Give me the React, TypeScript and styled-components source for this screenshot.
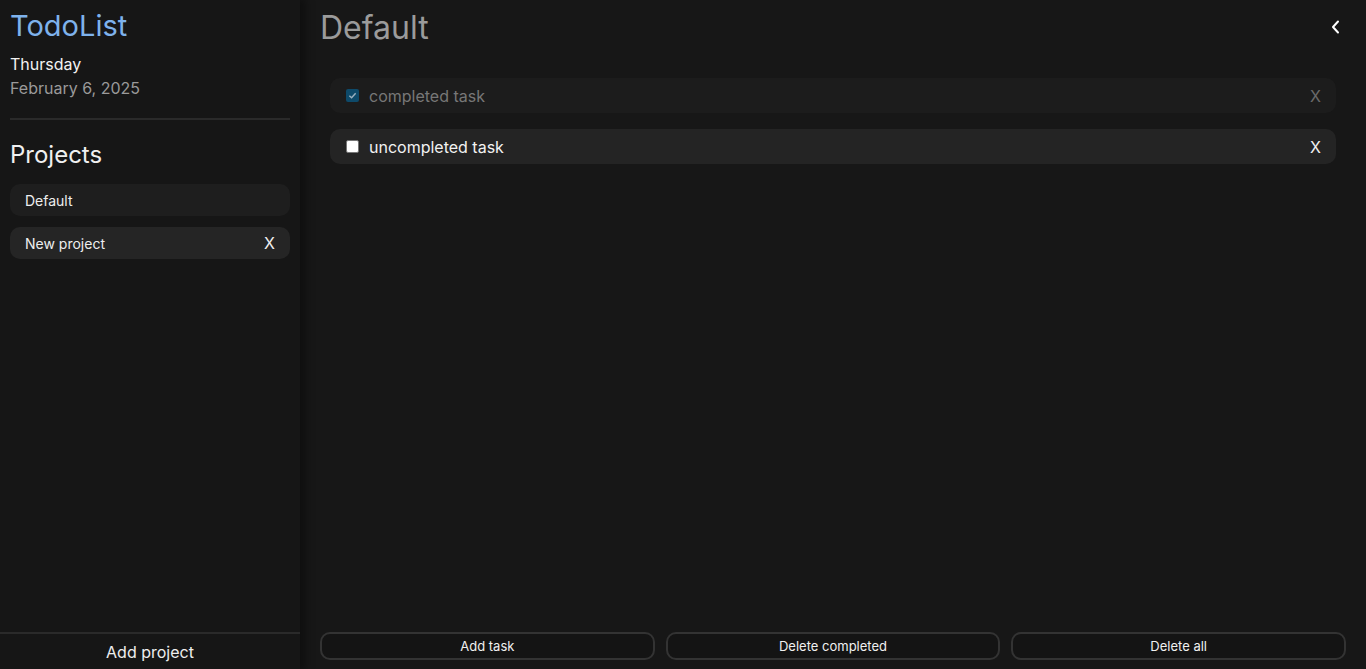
import styled, { createGlobalStyle } from 'styled-components';

const Global = createGlobalStyle`
  html, body {
    margin: 0;
    padding: 0;
    background: #171717;
    font-family: 'Inter', 'Noto Sans', sans-serif;
    color: #eeeeee;
  }
  * { box-sizing: border-box; }
`;

const Layout = styled.div`
  display: flex;
  height: 669px;
  width: 1366px;
  overflow: hidden;
  background: #171717;
`;

const Sidebar = styled.aside`
  width: 300px;
  flex-shrink: 0;
  display: flex;
  flex-direction: column;
  background: #161616;
  box-shadow: 4px 0px 8px 2px rgba(0, 0, 0, 0.35);
  position: relative;
  z-index: 1;
`;

const SideTop = styled.div`
  flex: 1;
  padding: 7px 10px 0 10px;
  display: flex;
  flex-direction: column;
`;

const Logo = styled.h1`
  margin: 0;
  font-size: 29px;
  font-weight: 400;
  line-height: 38px;
  color: #7eb2ec;
`;

const Weekday = styled.div`
  margin-top: 7px;
  font-size: 16px;
  line-height: 24px;
  color: #f2f2f2;
`;

const DateText = styled.div`
  font-size: 16px;
  line-height: 24px;
  color: #9a9a9a;
`;

const Divider = styled.hr`
  margin: 18px 0 0 0;
  border: none;
  height: 2px;
  background: #2a2a2a;
`;

const SectionTitle = styled.h2`
  margin: 20px 0 0 0;
  font-size: 24px;
  font-weight: 400;
  line-height: 30px;
  color: #f0f0f0;
`;

const ProjectList = styled.div`
  margin-top: 14px;
  display: flex;
  flex-direction: column;
  gap: 11px;
`;

const ProjectItem = styled.div<{ active?: boolean }>`
  height: 32px;
  border-radius: 10px;
  background: ${p => (p.active ? '#252525' : '#1e1e1e')};
  display: flex;
  align-items: center;
  justify-content: space-between;
  padding: 0 15px;
  font-size: 14px;
  color: #eeeeee;
`;

const Remove = styled.span<{ dim?: boolean }>`
  font-size: 16px;
  color: ${p => (p.dim ? '#6a6a6a' : '#f0f0f0')};
`;

const SideFooter = styled.button`
  height: 37px;
  border: none;
  border-top: 2px solid #2a2a2a;
  background: transparent;
  color: #eeeeee;
  font-family: inherit;
  font-size: 16px;
  padding: 0;
`;

const Main = styled.main`
  flex: 1;
  display: flex;
  flex-direction: column;
  padding: 6px 20px 9px 20px;
`;

const Header = styled.div`
  display: flex;
  align-items: center;
  justify-content: space-between;
  height: 42px;
`;

const Title = styled.h2`
  margin: 0;
  font-size: 32px;
  font-weight: 400;
  color: #9b9b9b;
`;

const Back = styled.div`
  width: 24px;
  height: 24px;
  margin-right: -2px;
  display: flex;
  align-items: center;
  justify-content: center;
`;

const TaskList = styled.div`
  flex: 1;
  padding: 30px 10px 0 10px;
  display: flex;
  flex-direction: column;
  gap: 16px;
`;

const Task = styled.div<{ done?: boolean }>`
  height: 35px;
  border-radius: 10px;
  background: ${p => (p.done ? '#1c1c1c' : '#242424')};
  display: flex;
  align-items: center;
  padding: 0 15px 0 15px;
  gap: 10px;
  font-size: 16px;
  color: ${p => (p.done ? '#777777' : '#f2f2f2')};
`;

const Check = styled.span<{ done?: boolean }>`
  width: 13px;
  height: 13px;
  margin-left: 1px;
  border-radius: 2px;
  background: ${p => (p.done ? '#0e4a6a' : '#ffffff')};
  border: ${p => (p.done ? 'none' : '1px solid #767676')};
  display: flex;
  align-items: center;
  justify-content: center;
`;

const TaskText = styled.span`
  flex: 1;
`;

const Actions = styled.div`
  display: grid;
  grid-template-columns: 1fr 1fr 1fr;
  gap: 11px;
`;

const ActionButton = styled.button`
  height: 28px;
  border: 2px solid #333333;
  border-radius: 10px;
  background: #141414;
  color: #f0f0f0;
  font-family: inherit;
  font-size: 13px;
`;

export default function App() {
  return (
    <>
      <Global />
      <Layout>
        <Sidebar>
          <SideTop>
            <Logo>TodoList</Logo>
            <Weekday>Thursday</Weekday>
            <DateText>February 6, 2025</DateText>
            <Divider />
            <SectionTitle>Projects</SectionTitle>
            <ProjectList>
              <ProjectItem>Default</ProjectItem>
              <ProjectItem active>
                New project
                <Remove>X</Remove>
              </ProjectItem>
            </ProjectList>
          </SideTop>
          <SideFooter>Add project</SideFooter>
        </Sidebar>
        <Main>
          <Header>
            <Title>Default</Title>
            <Back>
              <svg width="16" height="16" viewBox="0 0 16 16" fill="none">
                <path d="M10 2.5 L5 8 L10 13.5" stroke="#ffffff" strokeWidth="2" strokeLinecap="round" strokeLinejoin="round" />
              </svg>
            </Back>
          </Header>
          <TaskList>
            <Task done>
              <Check done>
                <svg width="9" height="9" viewBox="0 0 10 10">
                  <path d="M1.5 5.2 L4 7.5 L8.5 2.5" stroke="#9ab0bf" strokeWidth="1.6" fill="none" />
                </svg>
              </Check>
              <TaskText>completed task</TaskText>
              <Remove dim>X</Remove>
            </Task>
            <Task>
              <Check />
              <TaskText>uncompleted task</TaskText>
              <Remove>X</Remove>
            </Task>
          </TaskList>
          <Actions>
            <ActionButton>Add task</ActionButton>
            <ActionButton>Delete completed</ActionButton>
            <ActionButton>Delete all</ActionButton>
          </Actions>
        </Main>
      </Layout>
    </>
  );
}
